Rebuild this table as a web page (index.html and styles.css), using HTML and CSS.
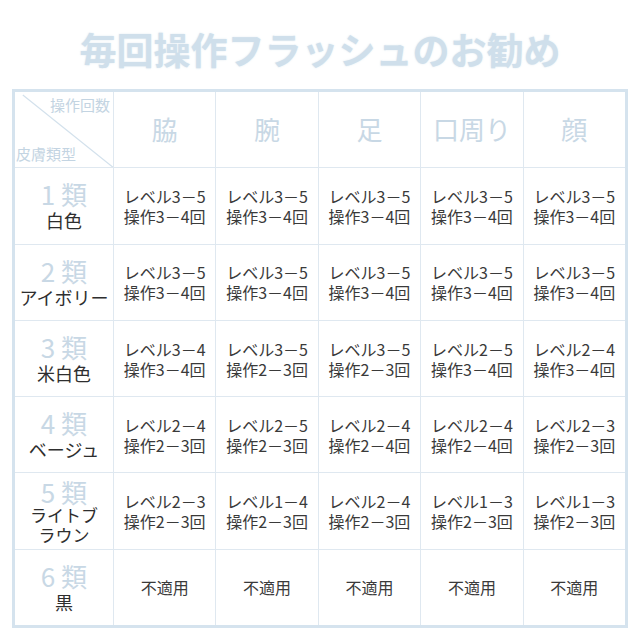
FILE: index.html
```html
<!DOCTYPE html>
<html lang="ja">
<head>
<meta charset="utf-8">
<link rel="stylesheet" href="styles.css">
</head>
<body>
<div class="page">
  <h1 class="title">毎回操作フラッシュのお勧め</h1>
  <div class="table">
    <div class="cell corner">
      <svg class="diag" viewBox="0 0 100 100" preserveAspectRatio="none"><line x1="8" y1="4" x2="100" y2="100" stroke="#d3e1ec" stroke-width="1.2" vector-effect="non-scaling-stroke"/></svg>
      <span class="corner-top">操作回数</span>
      <span class="corner-bottom">皮膚類型</span>
    </div>
    <div class="cell head">脇</div>
    <div class="cell head">腕</div>
    <div class="cell head">足</div>
    <div class="cell head">口周り</div>
    <div class="cell head">顔</div>

    <div class="cell label"><span class="num">1 類</span><span class="name">白色</span></div>
    <div class="cell val"><span>レベル3－5</span><span>操作3－4回</span></div>
    <div class="cell val"><span>レベル3－5</span><span>操作3－4回</span></div>
    <div class="cell val"><span>レベル3－5</span><span>操作3－4回</span></div>
    <div class="cell val"><span>レベル3－5</span><span>操作3－4回</span></div>
    <div class="cell val"><span>レベル3－5</span><span>操作3－4回</span></div>

    <div class="cell label"><span class="num">2 類</span><span class="name">アイボリー</span></div>
    <div class="cell val"><span>レベル3－5</span><span>操作3－4回</span></div>
    <div class="cell val"><span>レベル3－5</span><span>操作3－4回</span></div>
    <div class="cell val"><span>レベル3－5</span><span>操作3－4回</span></div>
    <div class="cell val"><span>レベル3－5</span><span>操作3－4回</span></div>
    <div class="cell val"><span>レベル3－5</span><span>操作3－4回</span></div>

    <div class="cell label"><span class="num">3 類</span><span class="name">米白色</span></div>
    <div class="cell val"><span>レベル3－4</span><span>操作3－4回</span></div>
    <div class="cell val"><span>レベル3－5</span><span>操作2－3回</span></div>
    <div class="cell val"><span>レベル3－5</span><span>操作2－3回</span></div>
    <div class="cell val"><span>レベル2－5</span><span>操作3－4回</span></div>
    <div class="cell val"><span>レベル2－4</span><span>操作3－4回</span></div>

    <div class="cell label"><span class="num">4 類</span><span class="name">ベージュ</span></div>
    <div class="cell val"><span>レベル2－4</span><span>操作2－3回</span></div>
    <div class="cell val"><span>レベル2－5</span><span>操作2－3回</span></div>
    <div class="cell val"><span>レベル2－4</span><span>操作2－4回</span></div>
    <div class="cell val"><span>レベル2－4</span><span>操作2－4回</span></div>
    <div class="cell val"><span>レベル2－3</span><span>操作2－3回</span></div>

    <div class="cell label three"><span class="num">5 類</span><span class="name">ライトブ</span><span class="name">ラウン</span></div>
    <div class="cell val"><span>レベル2－3</span><span>操作2－3回</span></div>
    <div class="cell val"><span>レベル1－4</span><span>操作2－3回</span></div>
    <div class="cell val"><span>レベル2－4</span><span>操作2－3回</span></div>
    <div class="cell val"><span>レベル1－3</span><span>操作2－3回</span></div>
    <div class="cell val"><span>レベル1－3</span><span>操作2－3回</span></div>

    <div class="cell label"><span class="num">6 類</span><span class="name">黒</span></div>
    <div class="cell val"><span>不適用</span></div>
    <div class="cell val"><span>不適用</span></div>
    <div class="cell val"><span>不適用</span></div>
    <div class="cell val"><span>不適用</span></div>
    <div class="cell val"><span>不適用</span></div>
  </div>
</div>
</body>
</html>
```
FILE: styles.css
```css
html, body {
  margin: 0;
  padding: 0;
  background: #ffffff;
}
.page {
  width: 640px;
  height: 640px;
  padding: 0 12px;
  box-sizing: border-box;
  font-family: "Noto Sans CJK JP", "Noto Sans", sans-serif;
}
.title {
  margin: 0;
  height: 89px;
  padding-top: 29px;
  box-sizing: border-box;
  text-align: center;
  font-size: 37px;
  line-height: 40px;
  font-weight: 700;
  color: #cfdfeb;
  text-shadow: 0 0 2px rgba(200, 218, 232, 0.6);
  letter-spacing: 0;
}
.table {
  display: grid;
  grid-template-columns: 98px repeat(5, 1fr);
  grid-auto-rows: 75.3px;
  gap: 1px;
  background: #dfe8f0;
  border: 3px solid #d5e3ee;
}
.cell {
  background: #ffffff;
  display: flex;
  flex-direction: column;
  align-items: center;
  justify-content: center;
  text-align: center;
}
.corner {
  position: relative;
}
.diag {
  position: absolute;
  left: 0;
  top: 0;
  width: 100%;
  height: 100%;
}
.corner-top {
  position: absolute;
  right: 3px;
  top: 4px;
  font-size: 15px;
  line-height: 18px;
  color: #c3d4e2;
}
.corner-bottom {
  position: absolute;
  left: 1px;
  bottom: 4px;
  font-size: 15px;
  line-height: 18px;
  color: #c3d4e2;
}
.head {
  font-size: 26px;
  color: #c8d8e5;
  padding-bottom: 2px;
}
.label .num {
  font-size: 26px;
  line-height: 29px;
  color: #c8d8e5;
}
.label .name {
  font-size: 18px;
  line-height: 24px;
  color: #2e2e2e;
}
.label.three .num {
  line-height: 27px;
}
.label.three .name {
  font-size: 17px;
  line-height: 20px;
}
.val {
  font-size: 16px;
  line-height: 20px;
  color: #3a3a3a;
}
.val span {
  display: block;
  height: 20px;
}
```
